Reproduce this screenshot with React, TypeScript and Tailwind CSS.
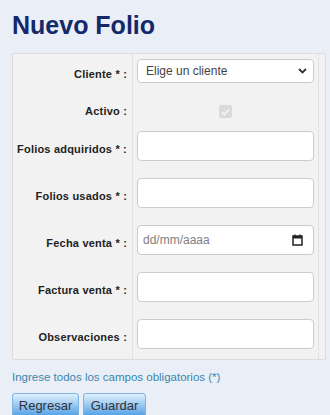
const rows = [
  { label: "Folios adquiridos * :", kind: "text" },
  { label: "Folios usados * :", kind: "text" },
  { label: "Fecha venta * :", kind: "date" },
  { label: "Factura venta * :", kind: "text" },
  { label: "Observaciones :", kind: "text" },
];

function Row({ label, height, children, top }: { label: string; height: string; children: React.ReactNode; top?: boolean }) {
  return (
    <div className={`flex ${height}`}>
      <div
        className={`flex w-[119px] justify-end pr-[5px] text-[11px] font-bold leading-[13px] tracking-[0.2px] text-[#222] ${
          top ? "items-start pt-[18px]" : "items-center pt-2"
        }`}
      >
        {label}
      </div>
      <div className={`flex w-[186px] border-l border-[#e2e2e2] px-[4px] ${top ? "items-start justify-center pt-[18px]" : "items-center"}`}>
        {children}
      </div>
      <div className="w-[6px] border-l border-[#e2e2e2]" />
    </div>
  );
}

function Field({ children }: { children?: React.ReactNode }) {
  return (
    <div className="flex h-[30px] w-full items-center rounded-[4px] border border-[#cccccc] bg-white">
      {children}
    </div>
  );
}

export default function App() {
  return (
    <div className="h-[415px] w-[330px] overflow-hidden bg-[#e9eef7] px-3 pt-[10px] font-['Liberation_Sans',Arial,sans-serif]">
      <h1 className="text-[25px] font-bold leading-[30px] text-[#13296b]">Nuevo Folio</h1>

      <div className="mt-[13px] w-[314px] rounded-[2px] border border-[#dcdcdc] bg-[#f2f2f2]">
        <Row label="Cliente * :" height="h-[33px]">
          <div className="flex h-[24px] w-full items-center justify-between rounded-[4px] border border-[#cccccc] bg-white pl-[8px] pr-[6px] text-[12px] text-[#444]">
            <span>Elige un cliente</span>
            <svg width="9" height="6" viewBox="0 0 9 6">
              <path d="M1 1l3.5 3.5L8 1" fill="none" stroke="#333" strokeWidth="1.8" />
            </svg>
          </div>
        </Row>

        <Row label="Activo :" height="h-[35px]" top>
          <div className="flex h-[13px] w-[13px] items-center justify-center rounded-[2px] bg-[#dadada]">
            <svg width="9" height="8" viewBox="0 0 9 8">
              <path d="M1 4.2l2.3 2.3L8 1.5" fill="none" stroke="#f6f6f6" strokeWidth="1.6" />
            </svg>
          </div>
        </Row>

        {rows.map((r) => (
          <Row key={r.label} label={r.label} height="h-[47px]">
            {r.kind === "date" ? (
              <Field>
                <div className="flex w-full items-center justify-between pl-[5px] pr-[10px]">
                  <span className="text-[12px] text-[#808080]">dd/mm/aaaa</span>
                  <svg width="11" height="12" viewBox="0 0 11 12">
                    <rect x="1" y="2" width="9" height="9" fill="none" stroke="#222" strokeWidth="1.5" />
                    <rect x="1" y="2" width="9" height="2.5" fill="#222" />
                    <path d="M3 0.5v2M8 0.5v2" stroke="#222" strokeWidth="1.3" />
                  </svg>
                </div>
              </Field>
            ) : (
              <Field />
            )}
          </Row>
        ))}

        <div className="flex h-[2px]">
          <div className="w-[119px]" />
          <div className="w-[186px] border-l border-[#e2e2e2]" />
          <div className="w-[6px] border-l border-[#e2e2e2]" />
        </div>
      </div>

      <p className="mt-[10px] text-[11.5px] leading-[14px] text-[#3a87ad]">
        Ingrese todos los campos obligatorios (*)
      </p>

      <div className="mt-[9px] flex gap-[4px]">
        <button className="h-[26px] w-[67px] rounded-[3px] border border-[#7fb4e2] bg-linear-to-b from-[#e0f0fc] to-[#3f98e2] text-[13px] text-[#333]">
          Regresar
        </button>
        <button className="h-[26px] w-[63px] rounded-[3px] border border-[#7fb4e2] bg-linear-to-b from-[#e0f0fc] to-[#3f98e2] text-[13px] text-[#333]">
          Guardar
        </button>
      </div>
    </div>
  );
}
